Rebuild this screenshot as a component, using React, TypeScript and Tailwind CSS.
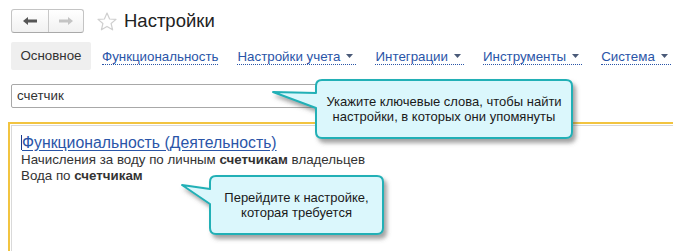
import React from "react";

const LINK = "text-[#2a55a8]";

function Caret() {
  return (
    <svg width="7" height="4" viewBox="0 0 7 4" className="ml-[6px] mr-[3px] mb-[2px] shrink-0">
      <path d="M0 0 H7 L3.5 4 Z" fill="#4a5a78" />
    </svg>
  );
}

function NavLink({ label, caret = true }: { label: string; caret?: boolean }) {
  return (
    <span className={`flex shrink-0 items-center whitespace-nowrap border-b border-dotted border-[#2a55a8] leading-[15px] ${LINK}`}>
      {label}
      {caret && <Caret />}
    </span>
  );
}

export default function App() {
  return (
    <div className="relative w-[673px] h-[251px] overflow-hidden bg-white font-['Liberation_Sans',Arial,sans-serif] text-[13.33px] text-[#333]">
      {/* header */}
      <div className="flex items-center pt-[9px] pl-[11px] h-[33px]">
        <div className="flex h-[24px] w-[73px] rounded-[3px] border border-[#c4c4c4] border-b-[#a9a9a9] bg-gradient-to-b from-white to-[#f1f1f1]">
          <div className="flex w-[37px] items-center justify-center border-r border-[#c8c8c8]">
            <svg width="14" height="8" viewBox="0 0 14 8">
              <path d="M0 4 L5 0 V2.5 H14 V5.5 H5 V8 Z" fill="#555" />
            </svg>
          </div>
          <div className="flex flex-1 items-center justify-center">
            <svg width="14" height="8" viewBox="0 0 14 8">
              <path d="M14 4 L9 0 V2.5 H0 V5.5 H9 V8 Z" fill="#c4c4c4" />
            </svg>
          </div>
        </div>
        <svg width="20" height="19" viewBox="0 0 20 19" className="ml-[13px]">
          <path
            d="M10 1 L12.6 7 L19 7.4 L14.1 11.5 L15.6 17.8 L10 14.4 L4.4 17.8 L5.9 11.5 L1 7.4 L7.4 7 Z"
            fill="none"
            stroke="#cfcfcf"
            strokeWidth="1.2"
            strokeLinejoin="round"
          />
        </svg>
        <span className="ml-[7px] text-[18.5px] leading-[24px] text-[#222]">Настройки</span>
      </div>

      {/* tabs */}
      <div className="mt-[9px] flex items-center pl-[11px] h-[28px] whitespace-nowrap">
        <div className="flex h-[28px] w-[80px] shrink-0 items-center justify-center rounded-[2px] bg-[#efefef] text-[#333]">
          Основное
        </div>
        <div className="ml-[11px] flex items-center gap-[19px] pt-[2px]">
          <NavLink label="Функциональность" caret={false} />
          <NavLink label="Настройки учета" />
          <NavLink label="Интеграции" />
          <NavLink label="Инструменты" />
          <NavLink label="Система" />
        </div>
      </div>

      {/* search */}
      <div className="mt-[14px] pl-[11px]">
        <div className="flex h-[24px] w-[330px] items-center rounded-[2px] border border-[#a8a8a8] pl-[5px] text-[#333]">
          счетчик
        </div>
      </div>

      {/* results */}
      <div className="mt-[14px] ml-[8px] h-[140px] border-l-2 border-t-2 border-[#f2c440]">
        <div className="h-full border-l border-t border-[#d9d9d9] ml-[1px] mt-[1px] pl-[9px] pt-[8px]">
          <div className="flex items-center">
            <span className="h-[15px] w-px bg-[#1a3a8a]" />
            <span className="text-[15.8px] leading-[17px] text-[#2a55a8] underline underline-offset-2">
              Функциональность (Деятельность)
            </span>
          </div>
          <div className="leading-[17px] text-[#333]">
            Начисления за воду по личным <b className="font-bold">счетчикам</b> владельцев
          </div>
          <div className="leading-[16px] text-[#333]">
            Вода по <b className="font-bold">счетчикам</b>
          </div>
        </div>
      </div>

      {/* callout 1 */}
      <div className="absolute left-[265px] top-[75px] w-[320px] h-[78px]">
        <svg width="320" height="78" viewBox="0 0 320 78" className="absolute inset-0">
          <defs>
            <filter id="sh1" x="-10%" y="-20%" width="130%" height="150%">
              <feDropShadow dx="3" dy="4" stdDeviation="2" floodColor="#555" floodOpacity="0.55" />
            </filter>
          </defs>
          <path
            d="M57 5 H301 Q307 5 307 11 V57 Q307 63 301 63 H57 Q51 63 51 57 V33 L8 17 L51 18 V11 Q51 5 57 5 Z"
            fill="#dbf7fc"
            stroke="#22b0b6"
            strokeWidth="2"
            strokeLinejoin="round"
            filter="url(#sh1)"
          />
        </svg>
        <div className="absolute left-[51px] top-[5px] flex h-[58px] w-[256px] flex-col items-center justify-center text-center text-[13px] leading-[15px] text-[#1a1a1a]">
          <span>Укажите ключевые слова, чтобы найти</span>
          <span>настройки, в которых они упомянуты</span>
        </div>
      </div>

      {/* callout 2 */}
      <div className="absolute left-[175px] top-[170px] w-[222px] h-[78px]">
        <svg width="222" height="78" viewBox="0 0 222 78" className="absolute inset-0">
          <defs>
            <filter id="sh2" x="-10%" y="-20%" width="130%" height="150%">
              <feDropShadow dx="3" dy="4" stdDeviation="2" floodColor="#555" floodOpacity="0.55" />
            </filter>
          </defs>
          <path
            d="M41 6 H202 Q208 6 208 12 V58 Q208 64 202 64 H41 Q35 64 35 58 V34 L7 15 L35 19 V12 Q35 6 41 6 Z"
            fill="#dbf7fc"
            stroke="#22b0b6"
            strokeWidth="2"
            strokeLinejoin="round"
            filter="url(#sh2)"
          />
        </svg>
        <div className="absolute left-[35px] top-[6px] flex h-[58px] w-[173px] flex-col items-center justify-center text-center text-[13px] leading-[15px] text-[#1a1a1a]">
          <span>Перейдите к настройке,</span>
          <span>которая требуется</span>
        </div>
      </div>
    </div>
  );
}
